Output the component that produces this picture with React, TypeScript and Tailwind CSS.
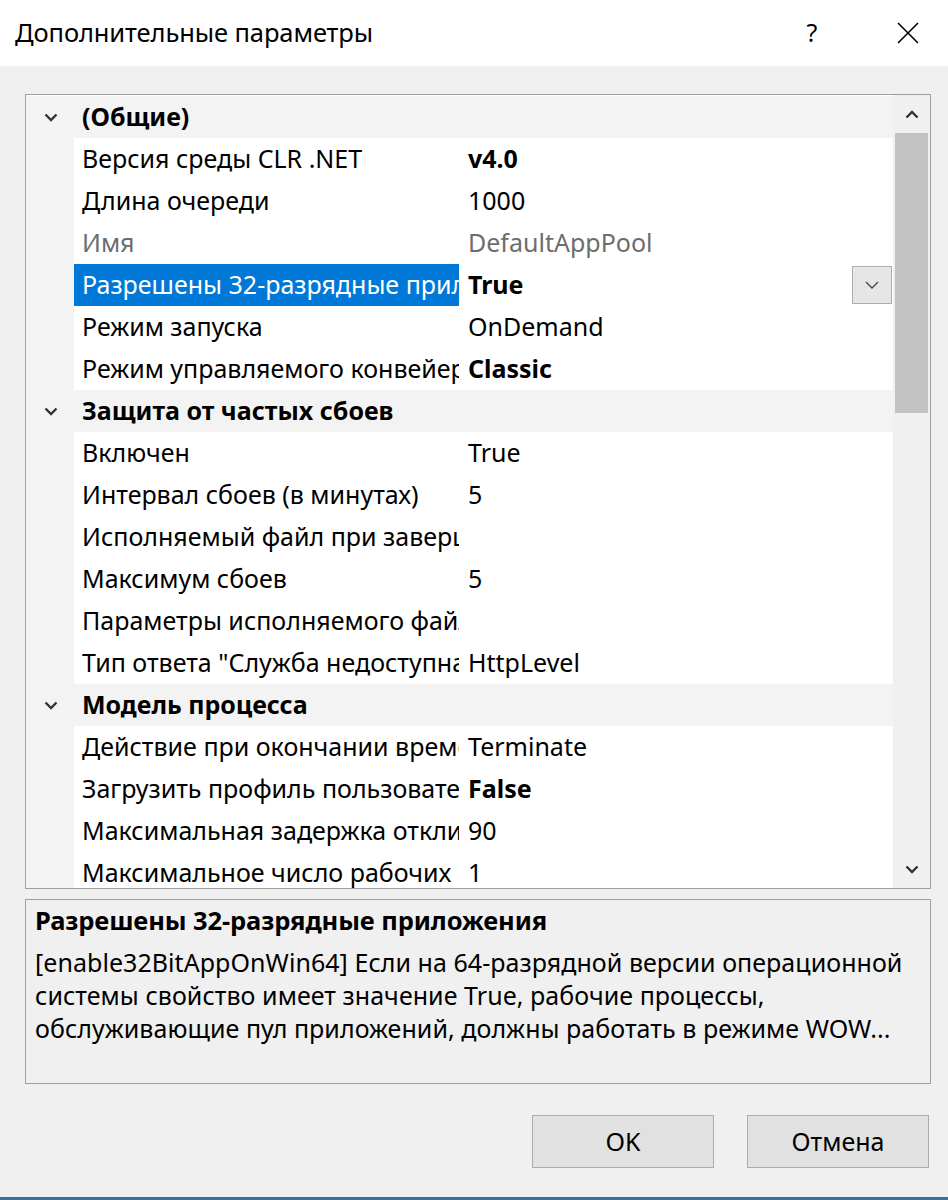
import React from 'react';

type Row =
  | { kind: 'cat'; name: string }
  | { kind: 'prop'; name: string; value: string; bold?: boolean; dim?: boolean; selected?: boolean };

const rows: Row[] = [
  { kind: 'cat', name: '(Общие)' },
  { kind: 'prop', name: 'Версия среды CLR .NET', value: 'v4.0', bold: true },
  { kind: 'prop', name: 'Длина очереди', value: '1000' },
  { kind: 'prop', name: 'Имя', value: 'DefaultAppPool', dim: true },
  { kind: 'prop', name: 'Разрешены 32-разрядные приложения', value: 'True', bold: true, selected: true },
  { kind: 'prop', name: 'Режим запуска', value: 'OnDemand' },
  { kind: 'prop', name: 'Режим управляемого конвейера', value: 'Classic', bold: true },
  { kind: 'cat', name: 'Защита от частых сбоев' },
  { kind: 'prop', name: 'Включен', value: 'True' },
  { kind: 'prop', name: 'Интервал сбоев (в минутах)', value: '5' },
  { kind: 'prop', name: 'Исполняемый файл при завершении', value: '' },
  { kind: 'prop', name: 'Максимум сбоев', value: '5' },
  { kind: 'prop', name: 'Параметры исполняемого файла', value: '' },
  { kind: 'prop', name: 'Тип ответа "Служба недоступна"', value: 'HttpLevel' },
  { kind: 'cat', name: 'Модель процесса' },
  { kind: 'prop', name: 'Действие при окончании времени простоя', value: 'Terminate' },
  { kind: 'prop', name: 'Загрузить профиль пользователя', value: 'False', bold: true },
  { kind: 'prop', name: 'Максимальная задержка отклика', value: '90' },
  { kind: 'prop', name: 'Максимальное число рабочих процессов', value: '1' },
];

const Chevron = ({ up = false }: { up?: boolean }) => (
  <svg width="14" height="9" viewBox="0 0 14 9">
    <path
      d={up ? 'M1.5 7.5 L7 2 L12.5 7.5' : 'M1.5 1.5 L7 7 L12.5 1.5'}
      fill="none"
      stroke="currentColor"
      strokeWidth="2.4"
    />
  </svg>
);

export default function App() {
  return (
    <div
      className="w-[948px] h-[1200px] bg-[#f0f0f0] flex flex-col text-[#000] overflow-hidden relative"
      style={{ fontFamily: '"Noto Sans", "Open Sans", sans-serif' }}
    >
      {/* title bar */}
      <div className="h-[66px] bg-white flex items-center pl-[15px] shrink-0">
        <div className="text-[25.5px] tracking-[-0.1px] flex-1 pb-[1px]">Дополнительные параметры</div>
        <div className="text-[25px] w-[30px] text-center mr-[70px]">?</div>
        <svg width="22" height="22" viewBox="0 0 22 22" className="mr-[29px]">
          <path d="M1 1 L21 21 M21 1 L1 21" stroke="#000" strokeWidth="1.6" />
        </svg>
      </div>

      {/* property grid */}
      <div className="ml-[25px] mr-[17px] mt-[28px] h-[795px] border border-[#a0a0a0] flex bg-white shrink-0">
        <div className="flex-1 overflow-hidden pt-[1px]">
          {rows.map((r, i) =>
            r.kind === 'cat' ? (
              <div key={i} className="h-[42px] flex items-center bg-[#f3f3f3]">
                <div className="w-[48px] flex justify-center pl-[2px] text-[#333]">
                  <Chevron />
                </div>
                <div className="pl-[8px] text-[25px] font-bold whitespace-nowrap">{r.name}</div>
              </div>
            ) : (
              <div key={i} className="h-[42px] flex items-stretch">
                <div className="w-[48px] bg-[#f3f3f3] shrink-0" />
                <div
                  className={`w-[385px] shrink-0 overflow-hidden whitespace-nowrap flex items-center pl-[8px] text-[25px] ${
                    r.selected ? 'bg-[#0078d7] text-white' : r.dim ? 'text-[#6d6d6d]' : ''
                  }`}
                >
                  {r.name}
                </div>
                <div
                  className={`flex-1 flex items-center pl-[9px] text-[25px] whitespace-nowrap ${
                    r.bold ? 'font-bold' : ''
                  } ${r.dim ? 'text-[#6d6d6d]' : ''}`}
                >
                  {r.value}
                </div>
                {r.selected && (
                  <div className="flex items-center pr-[1px]">
                    <div className="w-[40px] h-[38px] bg-[#e6e6e6] border border-[#adadad] flex items-center justify-center text-[#444]">
                      <svg width="14" height="8" viewBox="0 0 14 8">
                        <path d="M1 1 L7 7 L13 1" fill="none" stroke="currentColor" strokeWidth="1.3" />
                      </svg>
                    </div>
                  </div>
                )}
              </div>
            )
          )}
        </div>
        <div className="w-[37px] bg-[#f0f0f0] flex flex-col shrink-0">
          <div className="h-[38px] flex items-center justify-center text-[#333]">
            <Chevron up />
          </div>
          <div className="mx-[2px] h-[280px] bg-[#c2c2c2]" />
          <div className="flex-1" />
          <div className="h-[38px] flex items-center justify-center text-[#333]">
            <Chevron />
          </div>
        </div>
      </div>

      {/* description */}
      <div className="ml-[25px] mr-[17px] mt-[10px] h-[185px] border border-[#a0a0a0] px-[9px] pt-[4px] shrink-0">
        <div className="text-[25.5px] font-bold leading-[33px] tracking-[-0.1px]">Разрешены 32-разрядные приложения</div>
        <div className="text-[25px] leading-[33px] mt-[9px] whitespace-nowrap tracking-[0.05px]">
          [enable32BitAppOnWin64] Если на 64-разрядной версии операционной
          <br />
          системы свойство имеет значение True, рабочие процессы,
          <br />
          обслуживающие пул приложений, должны работать в режиме WOW...
        </div>
      </div>

      {/* buttons */}
      <div className="flex justify-end gap-[33px] mt-[31px] mr-[19px]">
        <button className="w-[182px] h-[53px] bg-[#e1e1e1] border border-[#adadad] text-[25px]">OK</button>
        <button className="w-[182px] h-[53px] bg-[#e1e1e1] border border-[#adadad] text-[25px]">Отмена</button>
      </div>

      <div className="absolute left-0 right-0 bottom-0 h-[3px] bg-[#3a6ea5]" />
    </div>
  );
}
